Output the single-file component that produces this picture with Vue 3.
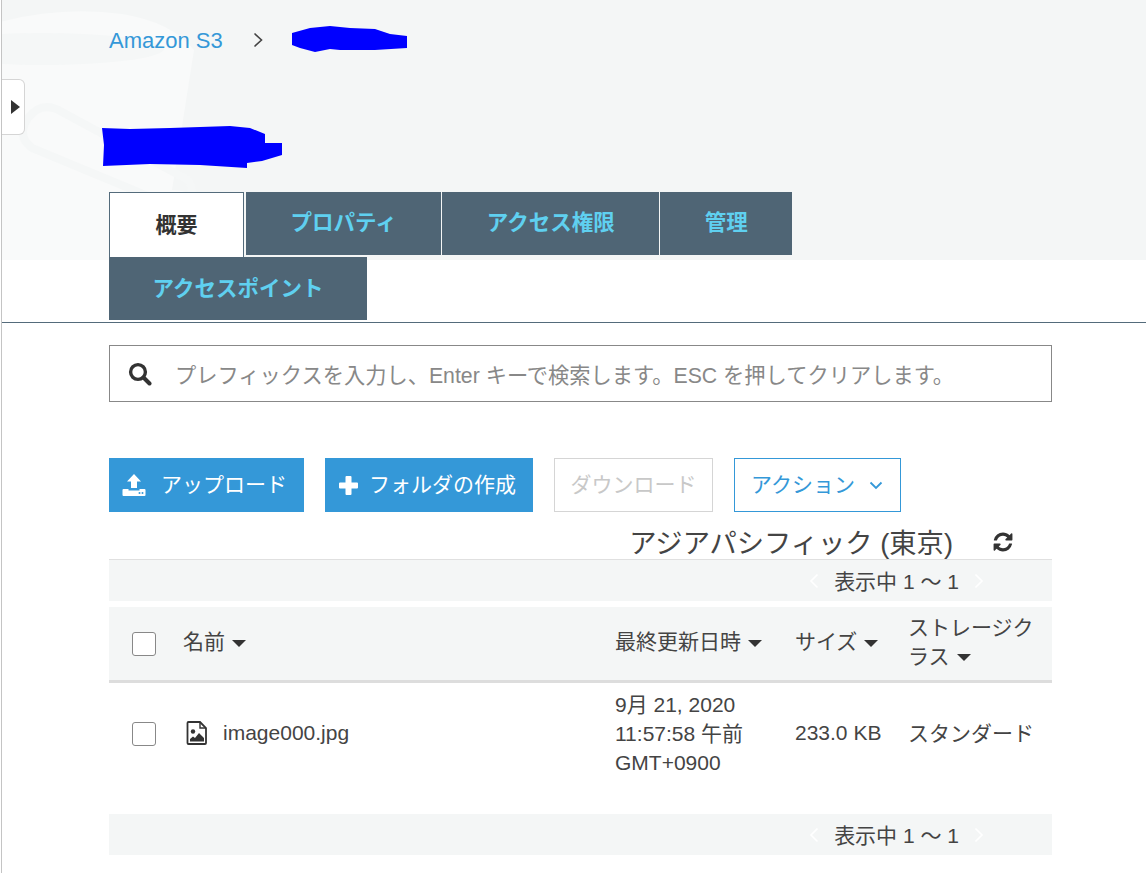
<template>
  <div class="page">
    <button class="side-toggle" aria-label="open"><span class="side-arrow"></span></button>

    <div class="hero">
      <svg class="watermark" width="240" height="260" viewBox="0 0 240 260">
        <path d="M-2 22 Q60 6 120 14 Q170 22 192 50 L170 190 Q200 190 214 226 L214 260 L-2 260 Z" fill="#f9fafa" />
        <ellipse cx="40" cy="49" rx="122" ry="16" fill="#f5f7f7" />
        <path d="M26 118 Q40 100 60 112 L186 180 Q196 196 180 206 L170 206 L30 148 Q14 136 26 118 Z" fill="none" stroke="#f5f7f7" stroke-width="8" />
      </svg>

      <div class="crumbs">
        <a class="crumb-link">Amazon S3</a>
        <svg class="crumb-sep" width="10" height="16" viewBox="0 0 10 16">
          <path d="M1.5 1.5 L8.5 8 L1.5 14.5" fill="none" stroke="#444" stroke-width="1.6" />
        </svg>
        <svg class="crumb-scribble" width="116" height="26" viewBox="0 0 116 26">
          <path d="M0 7 L18 2 L38 0 L58 2 L83 3 L98 8 L115 10 L115 22 L83 24 L48 24 L38 23 L23 26 L8 22 L0 19 Z" fill="#0000ff" />
        </svg>
      </div>

      <svg class="title-scribble" width="180" height="43" viewBox="0 0 180 43">
        <path d="M0 2 L28 3 L68 2 L128 0 L148 2 L163 8 L163 17 L180 17 L180 29 L160 35 L145 37 L145 42 L98 39 L48 38 L1 40 L2 19 Z" fill="#0000ff" />
      </svg>

      <div class="tabs">
        <div v-for="tab in tabs" :key="tab" :class="['tab', { 'tab--active': tab === '概要' }]">{{ tab }}</div>
      </div>
    </div>

    <div class="content">
      <div class="search">
        <svg class="search-icon" width="24" height="24" viewBox="0 0 24 24">
          <circle cx="10" cy="10" r="7.4" fill="none" stroke="#333" stroke-width="3.4" />
          <path d="M15.5 15.5 L21.5 21.5" stroke="#333" stroke-width="4" stroke-linecap="round" />
        </svg>
        <span class="search-text">プレフィックスを入力し、Enter キーで検索します。ESC を押してクリアします。</span>
      </div>

      <div class="actions">
        <button class="btn btn--primary">
          <svg width="24" height="22" viewBox="0 0 24 22">
            <path d="M12 0 L19 7.5 L15 7.5 L15 14 L9 14 L9 7.5 L5 7.5 Z" fill="#fff" />
            <path d="M1.5 15 L6.5 15 L6.5 16.5 L17.5 16.5 L17.5 15 L22.5 15 Q23.5 15 23.5 16 L23.5 21 Q23.5 22 22.5 22 L1.5 22 Q0.5 22 0.5 21 L0.5 16 Q0.5 15 1.5 15 Z" fill="#fff" />
            <circle cx="17.5" cy="19" r="1" fill="#3498d8" />
            <circle cx="20.5" cy="19" r="1" fill="#3498d8" />
          </svg>
          <span>アップロード</span>
        </button>
        <button class="btn btn--primary btn--folder">
          <svg width="19" height="19" viewBox="0 0 19 19">
            <path d="M6.5 1 Q6.5 0 7.5 0 L11.5 0 Q12.5 0 12.5 1 L12.5 6.5 L18 6.5 Q19 6.5 19 7.5 L19 11.5 Q19 12.5 18 12.5 L12.5 12.5 L12.5 18 Q12.5 19 11.5 19 L7.5 19 Q6.5 19 6.5 18 L6.5 12.5 L1 12.5 Q0 12.5 0 11.5 L0 7.5 Q0 6.5 1 6.5 L6.5 6.5 Z" fill="#fff" />
          </svg>
          <span>フォルダの作成</span>
        </button>
        <button class="btn btn--disabled"><span>ダウンロード</span></button>
        <button class="btn btn--outline">
          <span>アクション</span>
          <svg width="14" height="9" viewBox="0 0 14 9">
            <path d="M1.5 1.5 L7 7 L12.5 1.5" fill="none" stroke="#3498d8" stroke-width="1.8" />
          </svg>
        </button>
      </div>

      <div class="region">
        <span class="region-name">アジアパシフィック (東京)</span>
        <svg class="region-refresh" width="22" height="22" viewBox="0 0 1792 1792">
          <path fill="#333" d="M1639 1056q0 5-1 7-64 268-268 434.5t-478 166.5q-146 0-282.5-55t-243.5-157l-129 129q-19 19-45 19t-45-19-19-45v-448q0-26 19-45t45-19h448q26 0 45 19t19 45-19 45l-137 137q71 66 161 102t187 36q134 0 250-65t186-179q11-17 53-117 8-23 30-23h192q13 0 22.5 9.5t9.5 22.5zm25-800v448q0 26-19 45t-45 19h-448q-26 0-45-19t-19-45 19-45l138-138q-148-137-349-137-134 0-250 65t-186 179q-11 17-53 117-8 23-30 23h-199q-13 0-22.5-9.5t-9.5-22.5v-7q65-268 270-434.5t480-166.5q146 0 284 55.5t245 156.5l130-129q19-19 45-19t45 19 19 45z" />
        </svg>
      </div>

      <div class="pager pager--top">
        <svg width="10" height="16" viewBox="0 0 10 16"><path d="M8.5 1.5 L2 8 L8.5 14.5" fill="none" stroke="#fff" stroke-width="1.6" /></svg>
        <span>表示中 1 ～ 1</span>
        <svg width="10" height="16" viewBox="0 0 10 16"><path d="M1.5 1.5 L8 8 L1.5 14.5" fill="none" stroke="#fff" stroke-width="1.6" /></svg>
      </div>

      <div class="table-head">
        <div class="cell-check"><span class="checkbox"></span></div>
        <div v-for="col in columns" :key="col" class="th">{{ col }}<span class="caret"></span></div>
      </div>

      <div class="table-row">
        <div class="cell-check"><span class="checkbox"></span></div>
        <div class="file-name">
          <svg width="22" height="24" viewBox="0 0 22 24">
            <path d="M2.5 1 L14 1 L20 7 L20 22 Q20 23 19 23 L2.5 23 Q1.5 23 1.5 22 L1.5 2 Q1.5 1 2.5 1 Z" fill="none" stroke="#333" stroke-width="1.8" />
            <path d="M14 1 L14 7 L20 7" fill="none" stroke="#333" stroke-width="1.4" />
            <circle cx="7" cy="10.5" r="2.2" fill="#333" />
            <path d="M4 20.5 L4 18 L7 15.5 L9 17 L13 12 L18 17 L18 20.5 Z" fill="#333" />
          </svg>
          <span class="file-label">image000.jpg</span>
        </div>
        <div class="date">9月 21, 2020<br />11:57:58 午前<br />GMT+0900</div>
        <div>233.0 KB</div>
        <div class="storage">スタンダード</div>
      </div>

      <div class="pager pager--bottom">
        <svg width="10" height="16" viewBox="0 0 10 16"><path d="M8.5 1.5 L2 8 L8.5 14.5" fill="none" stroke="#fff" stroke-width="1.6" /></svg>
        <span>表示中 1 ～ 1</span>
        <svg width="10" height="16" viewBox="0 0 10 16"><path d="M1.5 1.5 L8 8 L1.5 14.5" fill="none" stroke="#fff" stroke-width="1.6" /></svg>
      </div>
    </div>
  </div>
</template>

<script setup>
const tabs = ['概要', 'プロパティ', 'アクセス権限', '管理', 'アクセスポイント'];
const columns = ['名前', '最終更新日時', 'サイズ', 'ストレージクラス'];
</script>

<style>
html,
body {
  margin: 0;
  background: #fff;
}
</style>

<style scoped>
.page {
  position: relative;
  box-sizing: border-box;
  width: 1145px;
  height: 873px;
  margin-left: 1px;
  border-left: 1px solid #c4c4c4;
  overflow: hidden;
  font-family: "Liberation Sans", "Noto Sans CJK JP", sans-serif;
  font-size: 21px;
  color: #444;
}

.side-toggle {
  position: absolute;
  top: 79px;
  left: -1px;
  z-index: 2;
  width: 24px;
  height: 56px;
  padding: 0;
  background: #fff;
  border: 1px solid #d5d5d5;
  border-left: none;
  border-radius: 0 6px 6px 0;
}

.side-arrow {
  position: absolute;
  top: 20px;
  left: 10px;
  border-left: 9px solid #333;
  border-top: 7px solid transparent;
  border-bottom: 7px solid transparent;
}

.hero {
  position: relative;
  padding-left: 107px;
  padding-bottom: 2px;
  background: linear-gradient(#f4f6f6 260px, #fff 260px);
  border-bottom: 1px solid #546b7b;
}

.watermark {
  position: absolute;
  top: 0;
  left: 0;
}

.crumbs {
  position: relative;
  display: flex;
  align-items: center;
  height: 80px;
}

.crumb-link {
  width: 144px;
  margin-top: 1px;
  font-size: 22px;
  color: #3498d8;
}

.crumb-sep {
  margin-right: 30px;
}

.crumb-scribble {
  align-self: flex-start;
  margin-top: 26px;
  margin-left: -1px;
}

.title-scribble {
  position: relative;
  display: block;
  margin: 46px 0 23px -7px;
}

.tabs {
  position: relative;
  display: flex;
  flex-wrap: wrap;
  gap: 2px 1px;
  width: 720px;
}

.tab {
  box-sizing: border-box;
  height: 63px;
  padding: 0 44.5px;
  font-size: 21.5px;
  font-weight: 700;
  line-height: 62px;
  color: #5fd0f0;
  background: #4f6575;
}

.tab--active {
  height: 65px;
  margin-right: 1px;
  margin-bottom: -2px;
  padding: 0 45.5px;
  font-size: 21px;
  line-height: 64px;
  color: #333;
  background: #fff;
  border: 1px solid #546b7b;
  border-bottom: none;
}

.tab:last-child {
  width: 258px;
  padding: 0;
  line-height: 64px;
  text-align: center;
}

.content {
  padding: 22px 0 0 107px;
  width: 943px;
}

.search {
  box-sizing: border-box;
  display: flex;
  align-items: center;
  gap: 23px;
  height: 57px;
  padding-left: 18px;
  border: 1px solid #888;
}

.search-text {
  font-size: 21.25px;
  color: #888;
  white-space: nowrap;
}

.actions {
  display: flex;
  gap: 21px;
  margin-top: 56px;
}

.btn {
  box-sizing: border-box;
  display: flex;
  align-items: center;
  justify-content: center;
  height: 54px;
  padding: 0;
  font-family: inherit;
  font-size: 21px;
  background: #fff;
  border: 1px solid transparent;
  white-space: nowrap;
}

.btn span {
  margin-top: -5px;
}

.btn svg {
  flex: none;
}

.btn--primary {
  justify-content: flex-start;
  gap: 15px;
  width: 195px;
  padding-left: 12px;
  color: #fff;
  background: #3498d8;
}

.btn--folder {
  gap: 11px;
  width: 208px;
  padding-left: 13px;
}

.btn--disabled {
  width: 159px;
  color: #c8c8c8;
  border-color: #d5d5d5;
}

.btn--outline {
  gap: 14px;
  width: 167px;
  padding-right: 1px;
  color: #3498d8;
  border-color: #3498d8;
}

.region {
  box-sizing: border-box;
  display: flex;
  align-items: center;
  justify-content: flex-end;
  gap: 39px;
  height: 47px;
  padding-top: 10px;
  padding-right: 38px;
}

.region-name {
  font-size: 27.3px;
  white-space: nowrap;
}

.region-refresh {
  margin-top: 3px;
}

.pager {
  box-sizing: border-box;
  display: flex;
  align-items: center;
  justify-content: flex-end;
  gap: 15px;
  height: 41px;
  padding-right: 68px;
  background: #f4f6f6;
}

.pager span {
  margin-top: -2px;
}

.pager--top {
  height: 42px;
  border-top: 1px solid #e0e0e0;
}

.pager--bottom {
  margin-top: 29px;
}

.table-head,
.table-row {
  display: grid;
  grid-template-columns: 74px 432px 180px 113px 1fr;
  align-items: center;
}

.table-head {
  box-sizing: border-box;
  height: 76px;
  margin-top: 6px;
  background: #f4f6f6;
  border-bottom: 3px solid #ddd;
}

.table-row {
  box-sizing: border-box;
  height: 102px;
  padding-bottom: 2px;
}

.cell-check {
  padding-left: 23px;
}

.checkbox {
  box-sizing: border-box;
  display: block;
  width: 24px;
  height: 24px;
  background: #fff;
  border: 1px solid #888;
  border-radius: 3px;
}

.table-row .checkbox {
  margin-top: 2px;
}

.th {
  margin-top: -4px;
  line-height: 29px;
}

.caret {
  display: inline-block;
  margin-left: 7px;
  vertical-align: middle;
  border-top: 7px solid #333;
  border-left: 7px solid transparent;
  border-right: 7px solid transparent;
}

.file-name {
  display: flex;
  align-items: center;
  gap: 15px;
  margin-left: 3px;
}

.date {
  line-height: 29px;
}

.storage {
  margin-top: -2px;
}
</style>
